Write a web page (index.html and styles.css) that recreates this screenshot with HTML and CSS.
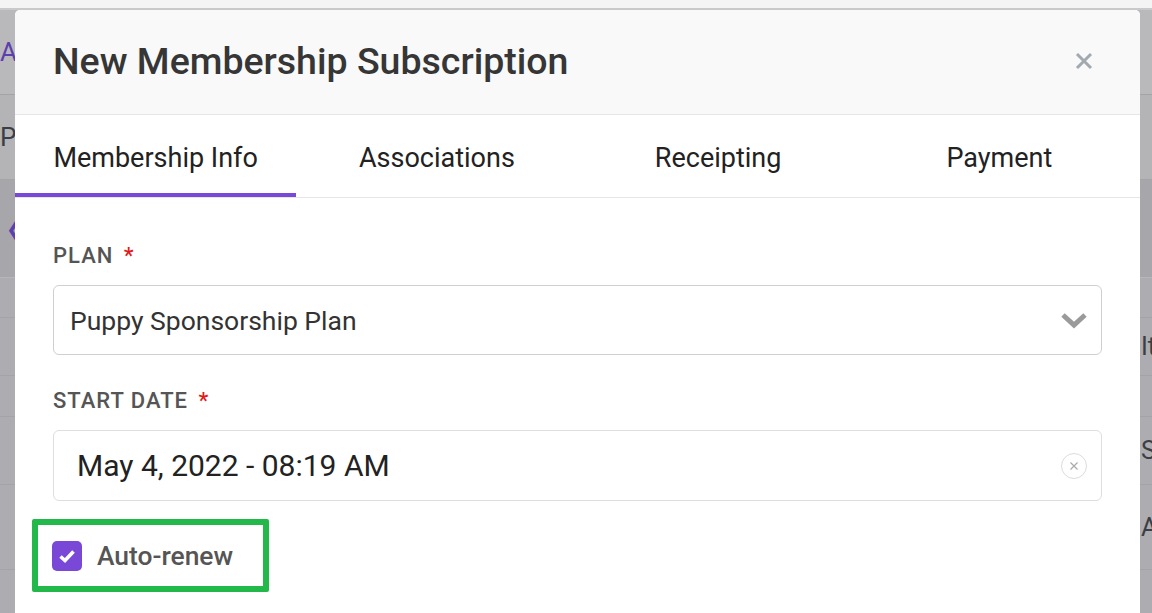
FILE: index.html
```html
<!DOCTYPE html>
<html lang="en">
<head>
<meta charset="utf-8">
<title>New Membership Subscription</title>
<link rel="stylesheet" href="styles.css">
</head>
<body>
<div class="page">
  <div class="topstrip"></div>
  <div class="bgrow r1"><span class="lt purple">A</span><span class="rt"></span></div>
  <div class="bgrow r2"><span class="lt dark">P</span><span class="rt"></span></div>
  <div class="bgrow r3"><span class="lt purple chev">&#10094;</span><span class="rt"></span></div>
  <div class="bgrow r4"><span class="lt"></span><span class="rt"></span></div>
  <div class="bgrow r5"><span class="lt"></span><span class="rt dark">It</span></div>
  <div class="bgrow r6"><span class="lt"></span><span class="rt"></span></div>
  <div class="bgrow r7"><span class="lt"></span><span class="rt dark">S</span></div>
  <div class="bgrow r8"><span class="lt"></span><span class="rt dark">A</span></div>
  <div class="bgrow r9"><span class="lt"></span><span class="rt"></span></div>
</div>

<div class="modal">
  <div class="modal-header">
    <h1 class="modal-title">New Membership Subscription</h1>
    <button class="close" aria-label="Close">
      <svg width="18" height="18" viewBox="0 0 18 18"><path d="M2 2L16 16M16 2L2 16" stroke="#a2a9b0" stroke-width="3" stroke-linecap="butt"/></svg>
    </button>
  </div>
  <div class="tabs">
    <div class="tab active">Membership Info</div>
    <div class="tab">Associations</div>
    <div class="tab">Receipting</div>
    <div class="tab">Payment</div>
  </div>
  <div class="modal-body">
    <div class="field">
      <label class="label">PLAN <span class="req">*</span></label>
      <div class="select">
        <span class="select-text">Puppy Sponsorship Plan</span>
        <svg class="chevron" width="28" height="18" viewBox="0 0 28 18"><path d="M3 4L14 14L25 4" fill="none" stroke="#9a9a9a" stroke-width="5"/></svg>
      </div>
    </div>
    <div class="field">
      <label class="label">START DATE <span class="req">*</span></label>
      <div class="date">
        <span class="date-text">May 4, 2022 - 08:19 AM</span>
        <span class="clear">
          <svg width="10" height="10" viewBox="0 0 10 10"><path d="M1.5 1.5L8.5 8.5M8.5 1.5L1.5 8.5" stroke="#aaa" stroke-width="1.2"/></svg>
        </span>
      </div>
    </div>
    <div class="highlight">
      <span class="checkbox">
        <svg width="20" height="18" viewBox="0 0 20 18"><path d="M3.5 9.5L8 13.5L16.5 4.5" fill="none" stroke="#fff" stroke-width="3.6"/></svg>
      </span>
      <span class="check-label">Auto-renew</span>
    </div>
  </div>
</div>
</body>
</html>
```
FILE: styles.css
```css
* { box-sizing: border-box; }
html, body { margin: 0; padding: 0; }
body {
  width: 1152px;
  height: 613px;
  overflow: hidden;
  font-family: Roboto, "Noto Sans", Arial, sans-serif;
  background: #adadb1;
  position: relative;
}
.page { display: flex; flex-direction: column; }
.topstrip { height: 10px; background: #f4f4f4; border-bottom: 2px solid #c9c9cb; }
.bgrow {
  display: grid;
  grid-template-columns: 1141px 1fr;
  align-items: center;
  border-bottom: 1px solid #a4a4a8;
  font-size: 26px;
  overflow: hidden;
  white-space: nowrap;
}
.lt { padding-left: 0; }
.purple { color: #5b3fae; }
.dark { color: #3b3e44; }
.chev { padding-left: 6px; font-size: 20px; }
.r1 { height: 85px; background: #b9b9bc; }
.r2 { height: 85px; background: #b4b4b7; }
.r3 { height: 98px; background: #a7a7ab; border-bottom-color: #b7b7ba; }
.r4 { height: 40px; background: #adadb1; }
.r5 { height: 58px; background: #adadb1; }
.r6 { height: 41px; background: #adadb1; }
.r7 { height: 68px; background: #adadb1; }
.r8 { height: 85px; background: #adadb1; }
.r9 { height: 60px; background: #adadb1; border-bottom: 0; }
.rt { font-size: 25px; }

.modal {
  position: absolute;
  left: 15px;
  top: 10px;
  width: 1125px;
  height: 620px;
  background: #fff;
  border-radius: 5px 5px 0 0;
  overflow: hidden;
}
.modal-header {
  height: 105px;
  background: #f9f9f9;
  border-bottom: 1px solid #e6e6e6;
  display: flex;
  align-items: center;
  justify-content: space-between;
  padding: 0 47px 2px 38px;
}
.modal-title {
  margin: 0;
  font-size: 37.5px;
  font-weight: 500;
  color: #363636;
  letter-spacing: 0;
}
.close {
  border: 0;
  background: none;
  padding: 0;
  width: 18px;
  height: 18px;
  display: flex;
}
.tabs {
  display: grid;
  grid-template-columns: repeat(4, 1fr);
  height: 83px;
  border-bottom: 1px solid #e6e6e6;
}
.tab {
  display: flex;
  align-items: center;
  justify-content: center;
  font-size: 27px;
  color: #222;
  border-bottom: 4px solid transparent;
  padding-top: 8px;
}
.tab.active { border-bottom-color: #7a48d6; }

.modal-body {
  padding: 45px 38px 0 38px;
  display: flex;
  flex-direction: column;
}
.field { display: flex; flex-direction: column; }
.label {
  font-size: 22px;
  font-weight: 500;
  color: #555;
  letter-spacing: 1px;
  line-height: 26px;
  margin-bottom: 16px;
}
.req { color: #e21a1a; margin-left: 4px; }
.select {
  height: 70px;
  border: 1px solid #cfcfcf;
  border-radius: 6px;
  display: flex;
  align-items: center;
  justify-content: space-between;
  padding: 0 13px 0 16px;
  margin-bottom: 33px;
}
.select-text { font-size: 26.5px; color: #333; }
.date {
  height: 71px;
  border: 1px solid #dedede;
  border-radius: 6px;
  display: flex;
  align-items: center;
  justify-content: space-between;
  padding: 0 14px 0 23px;
}
.date-text { font-size: 30px; color: #222; }
.clear {
  width: 26px;
  height: 26px;
  border: 1px solid #dcdcdc;
  border-radius: 50%;
  display: flex;
  align-items: center;
  justify-content: center;
}
.highlight {
  margin: 18px 0 0 -21px;
  width: 237px;
  height: 73px;
  border: 6px solid #22b84a;
  border-radius: 2px;
  display: flex;
  align-items: center;
  padding-left: 14px;
  gap: 15px;
}
.checkbox {
  width: 30px;
  height: 30px;
  border-radius: 5px;
  background: #7a48d6;
  display: flex;
  align-items: center;
  justify-content: center;
}
.check-label { font-size: 26.4px; font-weight: 500; color: #555; }
```
